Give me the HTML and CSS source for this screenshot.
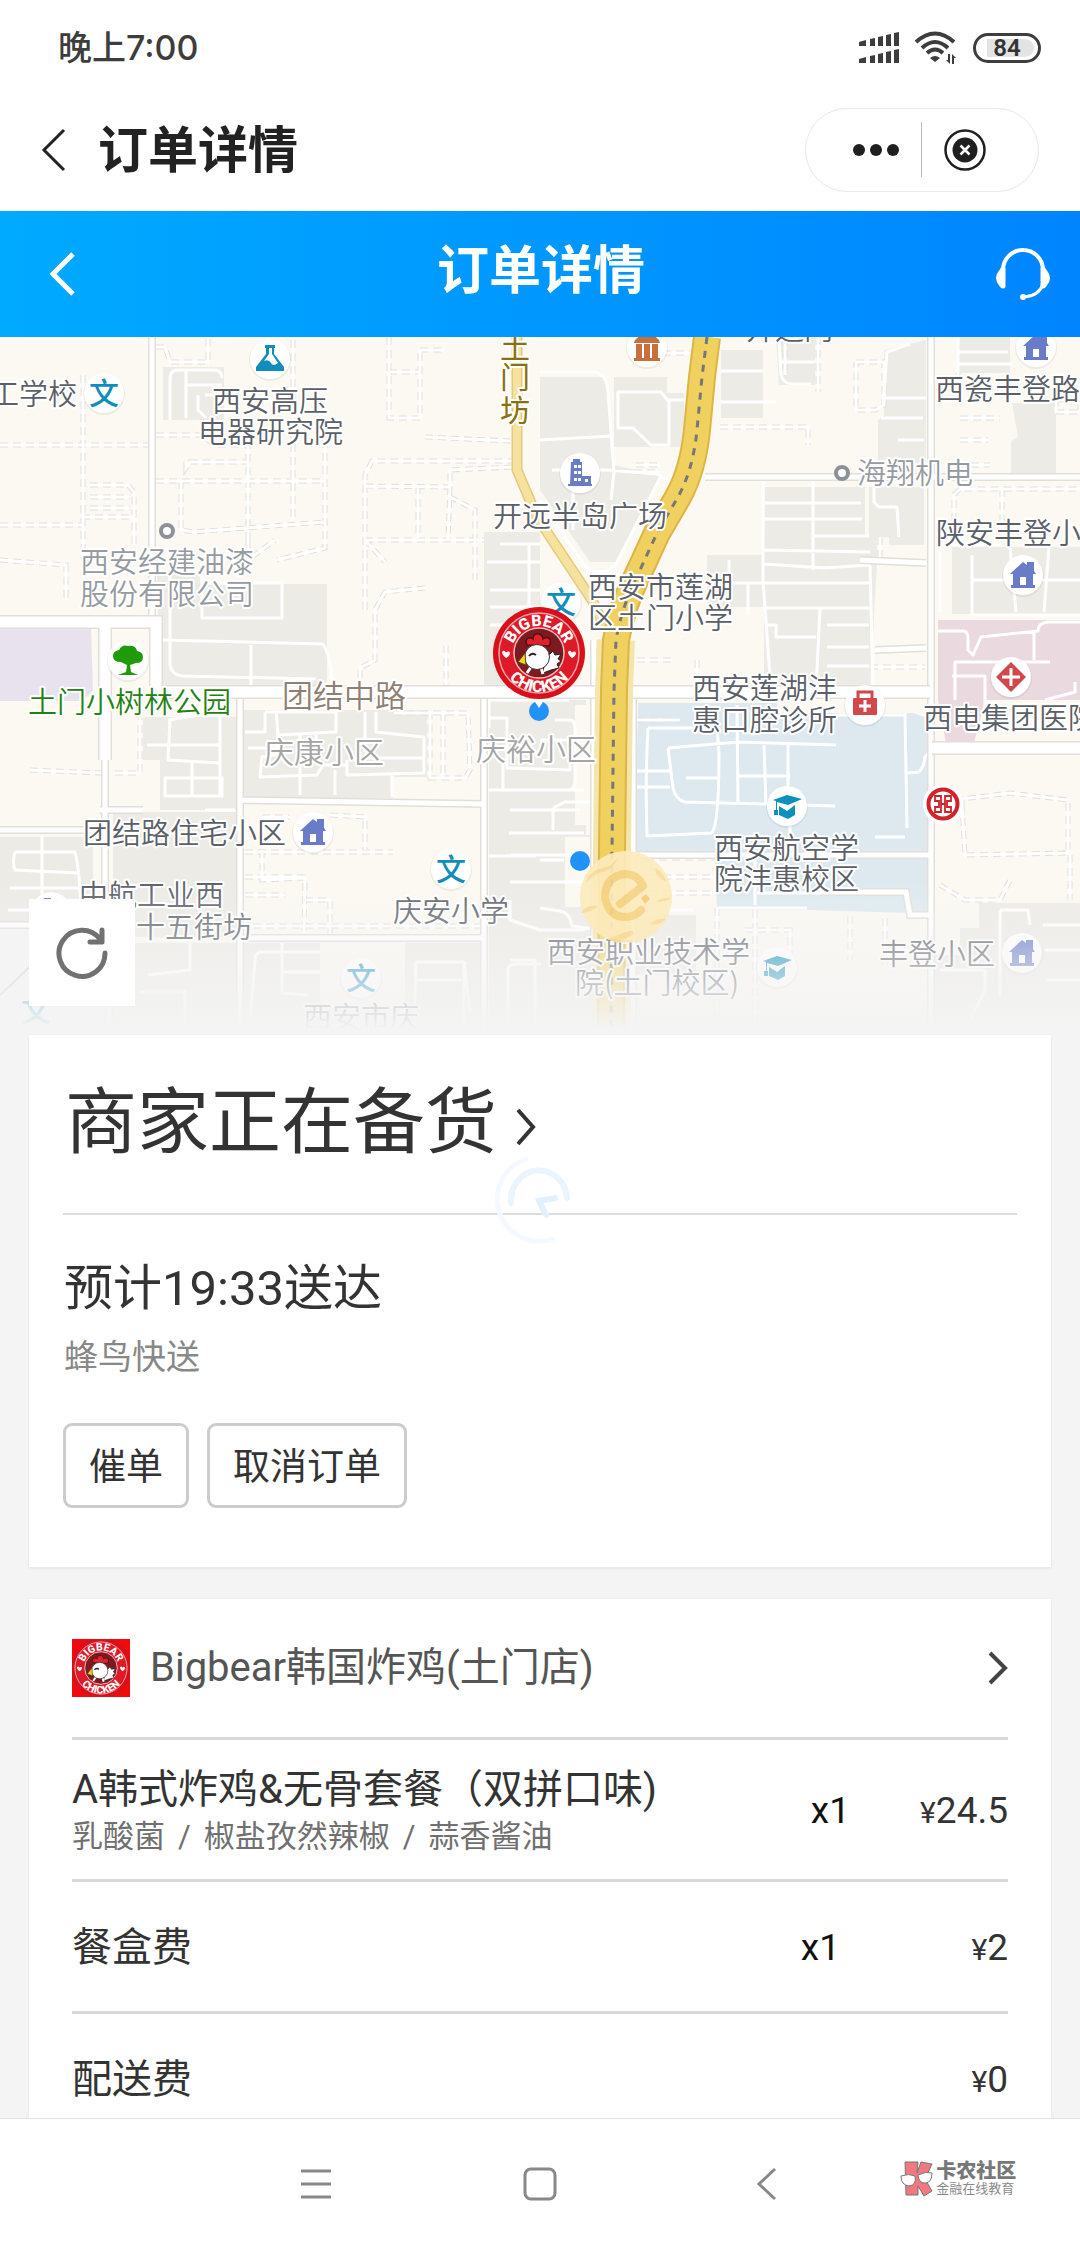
FILE: index.html
```html
<!DOCTYPE html>
<html lang="zh-CN">
<head>
<meta charset="utf-8">
<meta name="viewport" content="width=device-width, initial-scale=1">
<title>订单详情</title>
<link rel="stylesheet" href="styles.css">
</head>
<body>
<svg class="sprite" aria-hidden="true">
  <defs>
    <path id="arc-top" d="M19 46 A27 27 0 0 1 73 46"/>
    <path id="arc-bottom" d="M7 46 A39 39 0 0 0 85 46"/>
    <symbol id="brand" viewBox="0 0 92 92">
      <circle cx="46" cy="46" r="46" fill="#d9101a"/>
      <circle cx="46" cy="46" r="40" fill="#dd1a28" stroke="#f4a3a8" stroke-width="1.5"/>
      <circle cx="46" cy="46" r="25" fill="#7d1a20" stroke="#f7b9bc" stroke-width="1.5"/>
      <text class="brand-text"><textPath href="#arc-top" startOffset="50%" text-anchor="middle">BIGBEAR</textPath></text>
      <text class="brand-text"><textPath href="#arc-bottom" startOffset="50%" text-anchor="middle">CHICKEN</textPath></text>
      <path d="M9 45c2-3 4 0 4 1 0-1 3-3 4 0 0 3-4 5-4 5s-4-3-4-6zM75 45c2-3 4 0 4 1 0-1 3-3 4 0 0 3-4 5-4 5s-4-3-4-6z" fill="#fff"/>
      <path d="M34 38c-3-6 2-9 6-6 0-7 9-7 10 0 5-4 10 1 6 7z" fill="#e3202b" stroke="#4d1014" stroke-width="1.5"/>
      <path d="M52 52l8-8 2 4 6-1-3 5 3 2-4 3 2 4-8 2-8 3z" fill="#fff" stroke="#222" stroke-width="1"/>
      <path d="M38 60l-4 6M48 60l2 7" stroke="#fff" stroke-width="3"/>
      <circle cx="44" cy="50" r="12.5" fill="#fff" stroke="#333" stroke-width="1"/>
      <path d="M32 46l-7 9 8 3z" fill="#f1d128" stroke="#5b4a10" stroke-width="1"/>
      <path d="M36 49q3-4 7-1" fill="none" stroke="#222" stroke-width="2"/>
    </symbol>
    <symbol id="poi-bg" viewBox="-22 -22 44 44"><circle r="21" cy="1" fill="#000" opacity=".06"/><circle r="20" fill="#fff"/></symbol>
    <symbol id="house" viewBox="-22 -22 44 44">
      <circle r="21" cy="1" fill="#000" opacity=".06"/><circle r="20" fill="#fff"/>
      <path d="M-13-1L0-13l4 3v-3h7v9l2 3h-3v11h2v3h-24v-3h2V-1zM-3 2v8h6V2z" fill="#6a7bc8" fill-rule="evenodd"/>
    </symbol>
    <symbol id="building" viewBox="-22 -22 44 44">
      <circle r="21" cy="1" fill="#000" opacity=".06"/><circle r="20" fill="#fff"/>
      <path d="M-9-11h2v-3H0v3h2V3h9v8h1v2h-24v-2h2zM-6-8v3h3v-3zM-2-8v3h3v-3zM-6-2v3h3v-3zM-2-2v3h3v-3zM-6 5v3h3V5zM-2 5v3h3V5zM5 6v3h3V6z" fill="#6a7bc8" fill-rule="evenodd"/>
    </symbol>
    <symbol id="flask" viewBox="-22 -22 44 44">
      <circle r="21" cy="1" fill="#000" opacity=".06"/><circle r="20" fill="#fff"/>
      <path d="M-5-14H5v3H4v6L14 8v4h-28V8L-4-5v-6h-1zM-1-11v6l-5 7q5-2 7 2t7 0L2-5v-6z" fill="#118dbb" fill-rule="evenodd"/>
    </symbol>
    <symbol id="museum" viewBox="-22 -22 44 44">
      <circle r="21" cy="1" fill="#000" opacity=".06"/><circle r="20" fill="#fff"/>
      <path d="M-13-4q2-8 13-8t13 8zM-11-3h6v14h-6zM-3-3h6v14h-6zM5-3h6v14H5zM-13 11h26v3h-26z" fill="#c8703b"/>
    </symbol>
    <symbol id="tree" viewBox="-22 -22 44 44">
      <circle r="21" cy="1" fill="#000" opacity=".06"/><circle r="20" fill="#fff"/>
      <path d="M-2 12l1-7-6-3q-8 0-8-6 0-5 6-6 3-6 9-4 8-1 9 5 6 1 6 6 0 6-7 6L2 5l1 7 7 3h-20z" fill="#1f9a08"/>
    </symbol>
    <symbol id="cap" viewBox="-22 -22 44 44">
      <circle r="21" cy="1" fill="#000" opacity=".06"/><circle r="20" fill="#fff"/>
      <path d="M-14-6L0-11l15 4L1-1-10-4V4h1v5h-4V4h2v-9zM-8 0L0 5l8-6v10L1 13l-9-4z" fill="#0f8fbd"/>
    </symbol>
    <symbol id="medkit" viewBox="-22 -22 44 44">
      <circle r="21" cy="1" fill="#000" opacity=".06"/><circle r="20" fill="#fff"/>
      <path d="M-7-7v-6H7v6" fill="none" stroke="#d0474c" stroke-width="3"/>
      <rect x="-12" y="-7" width="24" height="17" rx="1" fill="#d0474c"/>
      <path d="M0-5v12M-6 1H6" stroke="#fff" stroke-width="3"/>
    </symbol>
    <symbol id="hospital" viewBox="-22 -22 44 44">
      <circle r="21" cy="1" fill="#000" opacity=".06"/><circle r="20" fill="#fff"/>
      <path d="M0-15L15 0 0 15-15 0z" fill="#d0474c"/>
      <path d="M0-9V9M-9 0H9" stroke="#fff" stroke-width="3"/>
    </symbol>
    <symbol id="bank" viewBox="-22 -22 44 44">
      <circle r="20" fill="#fff"/><circle r="14.5" fill="#fff" stroke="#cf2229" stroke-width="4"/>
      <path d="M-2-8h-6v5h4v6h-4v5h6zM2-8h6v5H4v6h4v5H2zM-2 0h4" fill="none" stroke="#cf2229" stroke-width="1.8"/>
    </symbol>
  </defs>
</svg>

<div class="app">
  <div class="status-bar">
    <span class="clock">晚上7:00</span>
    <div class="status-icons">
      <svg width="40" height="32" viewBox="0 0 40 32" fill="#3d3d3d" role="img" aria-label="信号">
        <path d="M0 10l7-2v6H0zM11 7l5-1v8h-5zM19 5l5-1v10h-5zM27 3l5-1v12h-5zM35 1l5-1v14h-5zM0 27l7-2v6H0zM11 24l5-1v8h-5zM19 22l5-1v10h-5zM27 20l5-1v12h-5zM35 18l5-1v14h-5z"/>
      </svg>
      <svg width="44" height="34" viewBox="0 0 44 34" role="img" aria-label="无线网络">
        <path d="M2 11Q21-6 40 11M8 17Q21 5 34 17M13 22Q21 15 29 22" fill="none" stroke="#3d3d3d" stroke-width="4"/>
        <path d="M16 27q5-4 10 0l-5 4zM36 23v10l-4-4h2v-6zM38 33V23l4 4h-2v6z" fill="#3d3d3d"/>
      </svg>
      <span class="battery"><span class="battery-level">84</span></span>
    </div>
  </div>

  <div class="mini-bar">
    <button class="icon-button" aria-label="返回">
      <svg width="26" height="44" viewBox="0 0 26 44" fill="none" stroke="#222" stroke-width="3"><path d="M24 2L4 22l20 20"/></svg>
    </button>
    <div class="mini-title">订单详情</div>
    <div class="capsule">
      <button class="icon-button" aria-label="更多">
        <svg width="46" height="12" viewBox="0 0 46 12" fill="#1f1f1f"><circle cx="6" cy="6" r="6"/><circle cx="23" cy="6" r="6"/><circle cx="40" cy="6" r="6"/></svg>
      </button>
      <span class="capsule-line"></span>
      <button class="icon-button" aria-label="关闭">
        <svg width="42" height="42" viewBox="0 0 42 42"><circle cx="21" cy="21" r="19.5" fill="none" stroke="#1f1f1f" stroke-width="2.5"/><circle cx="21" cy="21" r="12.5" fill="#1f1f1f"/><path d="M16.5 16.500l9 9M25.500 16.500l-9 9" stroke="#fff" stroke-width="2.5"/></svg>
      </button>
    </div>
  </div>

  <header class="top-bar">
    <button class="icon-button" aria-label="返回上一页">
      <svg width="28" height="44" viewBox="0 0 28 44" fill="none" stroke="#fff" stroke-width="5"><path d="M25 2L5 22l20 20"/></svg>
    </button>
    <h1>订单详情</h1>
    <button class="icon-button" aria-label="联系客服">
      <svg width="58" height="56" viewBox="0 0 58 56" fill="none" stroke="#fff">
        <path d="M9 30V24a20 20 0 0 1 40 0v8" stroke-width="4"/>
        <path d="M9 23v17M49 23v17" stroke-width="5" stroke-linecap="round"/>
        <path d="M6 25q-6 7 0 14zM52 25q6 7 0 14z" fill="#fff" stroke-width="2"/>
        <path d="M49 38Q45 50 30 51" stroke-width="3"/><circle cx="29" cy="51" r="3" fill="#fff" stroke="none"/>
      </svg>
    </button>
  </header>

  <main>
    <section class="map" aria-label="配送地图">
      <svg class="map-canvas" viewBox="0 337 1080 698" preserveAspectRatio="xMidYMid slice">
        <defs>
          <linearGradient id="fade" x1="0" y1="880" x2="0" y2="1030" gradientUnits="userSpaceOnUse">
            <stop offset="0" stop-color="#f4f4f4" stop-opacity="0"/><stop offset=".5" stop-color="#f4f4f4" stop-opacity=".5"/><stop offset="1" stop-color="#f4f4f4"/>
          </linearGradient>
          <path id="streets" d="M152 337V620L158 690M105 620V923L110 1035M240 692V1035M484 692V1035M240 800L484 804M240 938H484M0 830H105M705 477H1080M931 337V1035M633 690V1035M594 640V1035M860 560L926 563M0 925H110M875 650L926 648M100 810H143M600 855H930M932 915L910 915 906 892H820"/>
          <path id="avenues" d="M0 622H156V690M165 692H930M932 748H1080M105 620V760"/>
          <path id="paths" d="M156 347H165L170 362H208V337M83 375V560M0 445H150M156 435H200L215 445H248V540M156 481H325M186 462V468L190 462H248M181 481V530L193 532 325 522M248 540V560L275 540M325 440V548L277 560M293 340V520M90 485H128L134 492V545M90 497H130M90 508H130M82 517H134M0 525H82M0 560L66 565V600M389 337V418H420V350M389 372H420M420 350H445M425 437L512 441M365 610V475L372 461H512M365 486L450 487V470L512 467M418 486V538M450 487L448 540M450 497L475 510V580M365 540H484M365 540L385 562M425 588L385 592 375 610V660L360 668V690M446 645V690M818 337V392M785 337V375M856 362H884V405L876 410H856V362M958 373V400M958 465H990M960 418H1000M960 440H988M1056 400H1080V412H1056ZM954 547V495L960 489H1080M1002 489V540M720 427H808V445M637 353H690M636 465H660M634 472H660M880 537V565M637 660H672M697 660V675M870 667H925M30 770L102 773M115 773H140V718M262 817H290M330 815L365 817V850M245 852H393M262 850V880L305 878 304 935M245 877H305M245 895H285M305 900H330V935M240 926H484M394 713H468L470 770 465 778H430V715M443 713V778M637 720H680M637 877H716M637 893H716M646 858H716M717 908V1035M745 930H790V960M755 910V1030M850 916V960M885 918V965M962 805L965 855 1068 853V800L1010 793 962 799ZM940 885L965 900H1000L1010 880M1070 855V900"/>
          <path id="main-road" d="M707 337L702 377 697 430Q693 470 678 497L657 533 640 570Q622 605 616 640L614 690 612 850 611 1035"/>
        </defs>
        <rect y="337" width="1080" height="698" fill="#fcf9f2"/>
        <path fill="#f4f4f6" d="M0 925h105v110H0z"/>
        <path fill="#ecebe6" d="M163 367h61v53h-61zM157 575h43v9h127v106H160zM484 532h56v155h-56zM143 717h95v93h-78v-50h-17zM113 812h125v125H113zM243 710h184v67h-34v21H243zM0 837h93v86H0zM110 943h128v92H110zM243 943h77v92h-77zM405 943h77v92h-77zM489 700h97v335h-97zM586 835h6v200h-6zM540 377h66l7 88 47 10-43 87h-27l-50-72zM614 377h53v16h17v54h-70zM721 350h42v68h-42zM776 337h39v48h-36zM884 350l42-10v130h-48v-50l6-4zM958 337h52v36h-52zM1012 403h44v70h-45v-32l7-4zM765 487h100v50h-101zM869 487h55v58h-35v-8h-20zM764 537h113v26l-7 127H764zM707 555h57v52h-57zM952 547h128v67H952zM979 903h101v132H935v-80h25v-27h19zM633 915h63v60h-63z"/>
        <path fill="#fcf9f2" d="M565 837h28v70h-28zM575 705h18v120h-18z"/>
        <path fill="#ead9df" d="M938 620h142v80h-95l-11 43h-28l-8-43z"/>
        <path fill="#e8e2ee" d="M0 628h91l2 62-10 11H0z"/>
        <path fill="#dde9ef" d="M638 703h139v10h136l14 5v195h-17l-102-3h-91l-2-55h-80z"/>
        <use href="#paths" class="path-edge"/><use href="#paths" class="path-fill"/>
        <path class="lane" d="M170 420V378q0-8 8-8h36q8 0 8 8M186 370v48M186 385h36M198 395v15l8 8M205 395h17M170 575v90q2 10 12 11l134 3M202 575v43h80v-35h-78M163 640l160 4q8 12 10 45M251 645v40M500 544h40M487 562h53M490 590h50M490 607h50M490 625h30M529 545v80M540 372h55q12 2 13 20l6 80-3 28M540 440l72-4M618 392h43l8 10v43h-18l-18-17h-15zM668 400h25M721 371h42M721 402h55M779 340l2 35q2 8 10 9h20M780 362h35M910 344l-23 8-4 55M884 398h42M881 418h42M898 440h26M958 352h50M958 364h55M958 373v-36M552 470h55l50 4 20 12M660 478l-45 88q-15 12-30 0l-45-65M573 480v50M763 480v100l8 110M813 480v90M765 503h96M764 519h98M813 536h56M764 550l106 2M764 564l60 4 46-3M764 583h106M765 608h104M820 608l-4 82M767 625h9v12h40M827 625h42M827 647h42M827 666h42M729 560v42M707 583h57M748 583v32M874 487v15l5 5h18l2 30M870 565l3 125M940 612V545h62M972 555v60M1010 547l6 65M1049 547l-5 65M972 580h108M973 615h107M938 631h25q5 0 5 7v12l5 5 8-18 57-6q0-8 10-9h32M1034 630v30M955 700v-38h95M952 676h33v45M1045 700l30-8v-10"/>
        <path class="lane" d="M170 720l-2 40 52 3v-50M168 720l63-10M147 745h73M192 763v32M165 778h57v18h-57zM220 763v33M265 712v20h-20M265 712h71v20l-58 3-2-25M278 735l-3 20-13 2-2 20 57-2 6-10h24M300 735v60M316 735v20M335 770v25M347 760v15l77-2v-15h-75M365 712v40M376 712v20l48 5v20M392 775v22M248 748h35M15 852h60q5 20 6 60M15 852q-3 12 0 18l63 3M42 835v75M10 888h70M8 910h85M205 810h30M489 728v-28h80M489 718h18v50l63 2v-30h-30M503 765v25M484 790h100M486 856h50M510 810h70M509 833h75M511 855h76M510 882h74M510 900v20l30 10h45M553 808v22M553 808l12-6h30M510 960h25v70M555 720h15q5 0 5 9v50q0 10-5 11h-30M540 860h24M540 908l20 3q10 2 12 15l22 3M282 943v50l26 2M250 1020l5-60q0-8 8-8h57M282 972h38M416 962h48v65h-50zM416 980h45M464 962l6 50M508 1030v-60q0-6 8-6h25M148 975l42-5v-27M140 992h45v40M633 910h60M1000 910h28l2 15M1000 910v87M1043 925h37M1045 950h35M1045 980h35M940 970h45v20l-15 30"/>
        <path class="lane" d="M648 728h69l2 25q0 70-7 80l-65 3q-2-55 1-108M668 748l70-6 98 3M668 748l5 40q3 12 12 14l150 4M686 778h31M737 705l1 97M764 745l2 60M788 745v60M738 776h52M634 771h36M634 787h36M905 713l2 115M907 773l12-1q5-5 6-15l7-8M835 715h70M790 826v26M755 855v50M757 893h150M717 908h90M875 837h30"/>
        <use href="#streets" class="street-edge"/><use href="#streets" class="street-fill"/>
        <use href="#avenues" class="avenue-edge"/><use href="#avenues" class="avenue-fill"/>
        <path class="branch-edge" d="M517 337V470L537 517 592 600 606 630"/><path class="branch-fill" d="M517 337V470L537 517 592 600 606 630"/>
        <path class="main-side" d="M616 640L614 690 612 850 611 1035"/>
        <use href="#main-road" class="main-edge"/><use href="#main-road" class="main-fill"/><use href="#main-road" class="main-dash"/>
        <path d="M0 995L35 962" stroke="#ccc" stroke-width="2"/>

        <g class="pois">
          <use href="#poi-bg" x="82" y="371" width="44" height="44"/>
          <use href="#poi-bg" x="539" y="580" width="44" height="44"/>
          <use href="#poi-bg" x="429" y="847" width="44" height="44"/>
          <use href="#poi-bg" x="339" y="956" width="44" height="44"/>
          <text class="school" x="104" y="404">文</text>
          <text class="school" x="561" y="613">文</text>
          <text class="school" x="451" y="880">文</text>
          <text class="school" x="361" y="989">文</text>
          <text class="school" x="36" y="1021">文</text>
          <use href="#flask" x="248" y="337" width="44" height="44"/>
          <use href="#museum" x="625" y="325" width="44" height="44"/>
          <use href="#house" x="1014" y="325" width="44" height="44"/>
          <use href="#house" x="1001" y="553" width="44" height="44"/>
          <use href="#house" x="291" y="810" width="44" height="44"/>
          <use href="#house" x="1000" y="931" width="44" height="44"/>
          <use href="#building" x="558" y="451" width="44" height="44"/>
          <use href="#building" x="29" y="890" width="44" height="44"/>
          <use href="#tree" x="106" y="638" width="44" height="44"/>
          <use href="#medkit" x="843" y="683" width="44" height="44"/>
          <use href="#hospital" x="989" y="655" width="44" height="44"/>
          <use href="#cap" x="765" y="784" width="44" height="44"/>
          <use href="#cap" x="755" y="945" width="44" height="44"/>
          <use href="#bank" x="921" y="782" width="44" height="44"/>
          <circle cx="167" cy="531" r="6" fill="#fff" stroke="#8c9198" stroke-width="4"/>
          <circle cx="842" cy="473" r="6" fill="#fff" stroke="#8c9198" stroke-width="4"/>
        </g>
        <g class="labels">
          <text x="-10" y="405">工学校</text>
          <text x="212" y="412">西安高压</text><text x="198" y="443">电器研究院</text>
          <text x="746" y="340">开远门</text>
          <text x="935" y="400">西瓷丰登路</text>
          <text x="493" y="527">开远半岛广场</text>
          <text x="936" y="544">陕安丰登小</text>
          <text x="588" y="598">西安市莲湖</text><text x="588" y="629">区土门小学</text>
          <text x="692" y="699">西安莲湖沣</text><text x="692" y="731">惠口腔诊所</text>
          <text x="923" y="729">西电集团医院</text>
          <text x="83" y="844">团结路住宅小区</text>
          <text x="79" y="906">中航工业西</text><text x="136" y="938">十五街坊</text>
          <text x="393" y="922">庆安小学</text>
          <text x="714" y="859">西安航空学</text><text x="714" y="890">院沣惠校区</text>
          <text x="879" y="965">丰登小区</text>
          <text x="547" y="963">西安职业技术学</text><text x="575" y="994">院(土门校区)</text>
          <text x="303" y="1028">西安市庆</text>
          <text class="label-muted" x="80" y="573">西安经建油漆</text><text class="label-muted" x="80" y="605">股份有限公司</text>
          <text class="label-muted" x="857" y="484">海翔机电</text>
          <text class="label-park" x="28" y="713">土门小树林公园</text>
          <text class="label-street" x="282" y="707">团结中路</text>
          <text class="label-area" x="264" y="763">庆康小区</text>
          <text class="label-area" x="476" y="760">庆裕小区</text>
          <text class="label-branch" x="500" y="358">土</text><text class="label-branch" x="500" y="388">门</text><text class="label-branch" x="500" y="421">坊</text>
        </g>
        <rect y="880" width="1080" height="155" fill="url(#fade)"/>

        <circle cx="580" cy="861" r="10" fill="#2292fb"/>
        <g opacity=".92">
          <circle cx="626" cy="897" r="46" fill="#fdebbd"/>
          <path d="M588 876q9-8 22-10l8-8q-5 10-12 13-10 1-20 12zM582 911q6-6 16-5-6 6-17 7zM655 868q1 10 12 14-6-12-12-14zM656 901q8-4 15-3-4 5-15 3zM650 924q8-6 16-5-6 7-16 5zM607 939l22-8q8-1 2 5l-14 7z" fill="#f7dc9c"/>
          <path d="M643 886Q638 874 624 874 605 877 605 898 609 918 627 917 636 916 641 910M620 904L643 886" fill="none" stroke="#f5d487" stroke-width="8" stroke-linecap="round" stroke-linejoin="round"/>
          <path d="M641 898l5-4 4 5-5 5z" fill="#f5cb76"/>
        </g>
        <circle cx="539" cy="711" r="10" fill="#2292fb"/>
        <path d="M533 699h12l-6 9z" fill="#fff"/>
        <use href="#brand" x="493" y="607" width="92" height="92"/>
      </svg>
      <button class="refresh" aria-label="刷新">
        <svg width="52" height="54" viewBox="0 0 52 54" fill="none" stroke="#717171" stroke-width="5" stroke-linecap="round" stroke-linejoin="round">
          <path d="M49 27A23 23 0 1 1 44 13M46 4v12H34"/>
        </svg>
      </button>
    </section>

    <section class="card status-card">
      <h2 class="status-title"><a href="#progress">商家正在备货
        <svg width="22" height="38" viewBox="0 0 22 38" fill="none" stroke="#333" stroke-width="4"><path d="M3 2l15 17L3 36"/></svg></a>
      </h2>
      <svg class="loader" width="84" height="92" viewBox="0 0 84 92" fill="none" stroke-linecap="round" aria-hidden="true">
        <path d="M31 4A42 42 0 1 0 58 84" stroke="#f3f9fe" stroke-width="5"/>
        <path d="M16 48a28 30 0 0 1 56-5" stroke="#e9f4fd" stroke-width="6"/>
        <path d="M60 43l-16 3 7 14" stroke="#e3f1fc" stroke-width="6"/>
      </svg>
      <p class="eta">预计19:33送达</p>
      <p class="courier">蜂鸟快送</p>
      <div class="actions">
        <button class="action">催单</button>
        <button class="action">取消订单</button>
      </div>
    </section>

    <section class="card order-card">
      <a class="shop" href="#shop">
        <svg class="shop-logo" viewBox="0 0 58 58" aria-hidden="true"><rect width="58" height="58" fill="#ef0a0d"/><use href="#brand" x="-1" y="-1" width="60" height="60"/></svg>
        <span class="shop-name">Bigbear韩国炸鸡(土门店)</span>
        <svg width="20" height="34" viewBox="0 0 20 34" fill="none" stroke="#444" stroke-width="4"><path d="M2 2l15 15L2 32"/></svg>
      </a>
      <table class="items">
        <tbody>
          <tr class="dish">
            <td><div class="item-name">A韩式炸鸡&amp;无骨套餐（双拼口味)</div><div class="item-note"><span>乳酸菌</span><span>/</span><span>椒盐孜然辣椒</span><span>/</span><span>蒜香酱油</span></div></td>
            <td class="qty">x1</td>
            <td class="price"><small>¥</small>24.5</td>
          </tr>
          <tr class="fee"><td class="item-name">餐盒费</td><td class="qty">x1</td><td class="price"><small>¥</small>2</td></tr>
          <tr class="fee"><td class="item-name">配送费</td><td class="qty"></td><td class="price"><small>¥</small>0</td></tr>
        </tbody>
      </table>
    </section>
  </main>

  <nav class="system-nav" aria-label="系统导航">
    <button class="icon-button menu" aria-label="最近任务"><svg width="32" height="32" viewBox="0 0 32 32" stroke="#888" stroke-width="3"><path d="M1 3h30M1 16h30M1 29h30"/></svg></button>
    <button class="icon-button" aria-label="主屏幕"><svg width="34" height="34" viewBox="0 0 34 34" fill="none" stroke="#888" stroke-width="3"><rect x="2" y="2" width="30" height="30" rx="6"/></svg></button>
    <button class="icon-button" aria-label="后退"><svg width="22" height="34" viewBox="0 0 22 34" fill="none" stroke="#888" stroke-width="3"><path d="M19 2L3 17l16 15"/></svg></button>
    <div class="watermark">
      <svg width="34" height="36" viewBox="0 0 34 36" stroke="#777" stroke-width="1">
        <path d="M5 1h13l-1 11 4-11 11 2-7 15 7 12-8 5-6-10v9H6z" fill="#f07880"/>
        <path d="M1 15q8-3 14 0 2 9-6 10-8-1-8-10zM18 14q8-4 14-2 0 9-6 10-7 1-8-8z" fill="#fff"/>
      </svg>
      <div class="watermark-text"><strong>卡农社区</strong><span>金融在线教育</span></div>
    </div>
  </nav>
</div>
</body>
</html>
```

FILE: styles.css
```css
* { box-sizing: border-box; }

body {
  margin: 0;
  background: #f4f4f4;
  color: #333;
  font-family: Roboto, "Noto Sans CJK SC", sans-serif;
}

h1, h2, p { margin: 0; font-weight: 400; }
a { color: inherit; text-decoration: none; }
svg { display: block; flex: none; }
.sprite { position: absolute; width: 0; height: 0; }

.icon-button {
  display: flex;
  padding: 0;
  border: 0;
  background: none;
}

.app {
  display: flex;
  flex-direction: column;
  height: 100vh;
}

/* phone status bar */
.status-bar {
  display: flex;
  flex: none;
  align-items: center;
  justify-content: space-between;
  height: 96px;
  padding: 0 39px 0 58px;
  background: #fff;
}
.clock {
  color: #3d3d3d;
  font: 500 34px/40px Inter, "Noto Sans CJK SC", sans-serif;
}
.status-icons { display: flex; align-items: center; gap: 15px; }
.battery {
  display: flex;
  width: 68px;
  height: 30px;
  padding: 3px 4px 3px 11px;
  border: 3px solid #3d3d3d;
  border-radius: 15px;
}
.battery-level {
  flex: 1;
  padding-right: 7px;
  border-radius: 0 9px 9px 0;
  background: #e3e3e3;
  color: #333;
  font-size: 24px;
  font-weight: 600;
  line-height: 19px;
  text-align: center;
}

/* mini program bar */
.mini-bar {
  display: flex;
  flex: none;
  align-items: center;
  height: 115px;
  padding: 0 41px 8px 40px;
  background: #fff;
}
.mini-title {
  flex: 1;
  padding: 2px 0 0 32px;
  color: #222;
  font-size: 50px;
  font-weight: 700;
  line-height: 64px;
}
.capsule {
  display: flex;
  align-items: center;
  justify-content: flex-end;
  gap: 22px;
  width: 234px;
  height: 84px;
  padding-right: 52px;
  border: 1px solid #e8e8e8;
  border-radius: 42px;
}
.capsule-line { width: 1px; height: 55px; background: #bbb; }

/* page header */
.top-bar {
  display: grid;
  flex: none;
  grid-template-columns: 1fr auto 1fr;
  align-items: center;
  height: 126px;
  padding: 0 28px 0 48px;
  background: linear-gradient(90deg, #00aaff, #0085ff);
}
.top-bar h1 {
  padding: 0 16px 4px 0;
  margin-left: -2px;
  color: #fff;
  font-size: 52px;
  font-weight: 700;
  line-height: 64px;
}
.top-bar .icon-button:last-child { justify-self: end; }

main {
  flex: 1;
  min-height: 0;
  overflow-y: auto;
  scrollbar-width: none;
}

/* map */
.map { position: relative; height: 698px; }
.map-canvas { width: 100%; height: 100%; }
.refresh {
  position: absolute;
  bottom: 29px;
  left: 29px;
  display: grid;
  place-items: center;
  width: 106px;
  height: 107px;
  padding: 0;
  border: 0;
  background: #fff;
}
.lane { fill: none; stroke: #fff; stroke-width: 3; stroke-linejoin: round; }
.path-edge { fill: none; stroke: #e2dfdb; stroke-width: 5; stroke-dasharray: 8 5; }
.path-fill { fill: none; stroke: #fff; stroke-width: 3; }
.street-edge { fill: none; stroke: #e2dfda; stroke-width: 8; }
.street-fill { fill: none; stroke: #fff; stroke-width: 5; }
.avenue-edge { fill: none; stroke: #e2dfda; stroke-width: 14; }
.avenue-fill { fill: none; stroke: #fff; stroke-width: 11; }
.branch-edge { fill: none; stroke: #e5ca78; stroke-width: 11; }
.branch-fill { fill: none; stroke: #f6e29f; stroke-width: 8; }
.main-side { fill: none; stroke: #f4e5ad; stroke-width: 38; }
.main-edge { fill: none; stroke: #ddb545; stroke-width: 28; }
.main-fill { fill: none; stroke: #f0d160; stroke-width: 24; }
.main-dash { fill: none; stroke: #777; stroke-width: 3; stroke-dasharray: 7 7; }
.labels text {
  fill: #5b6068;
  stroke: #fff;
  stroke-width: 4px;
  stroke-linejoin: round;
  paint-order: stroke;
  font-family: "Noto Sans CJK SC", sans-serif;
  font-size: 29px;
  font-weight: 350;
}
.labels .label-muted { fill: #969aa1; }
.labels .label-park { fill: #1f8212; }
.labels .label-street { fill: #8f8074; font-size: 31px; }
.labels .label-area { fill: #a5a5a5; font-size: 30px; }
.labels .label-branch { fill: #8a7110; font-size: 30px; font-weight: 400; }
.school {
  fill: #118dbb;
  font-family: "Noto Sans CJK SC", sans-serif;
  font-size: 30px;
  font-weight: 500;
  text-anchor: middle;
}
.brand-text {
  fill: #fff;
  font-family: Roboto, sans-serif;
  font-size: 16px;
  font-weight: 800;
}

/* cards */
.card {
  margin: 0 29px;
  background: #fff;
  box-shadow: 0 1px 3px rgba(0, 0, 0, .08);
}
.status-card {
  position: relative;
  padding: 0 34px 59px;
}
.status-title {
  padding: 36px 2px 38px;
  border-bottom: 2px solid #ddd;
  font-size: 72px;
  line-height: 104px;
}
.status-title a { display: flex; align-items: center; gap: 18px; }
.status-title svg { margin-top: 8px; }
.loader { position: absolute; top: 120px; left: 466px; }
.eta { padding: 42px 1px 0; font-size: 49px; line-height: 64px; }
.courier { padding: 12px 1px 0; color: #888; font-size: 34px; line-height: 48px; }
.actions { display: flex; gap: 18px; padding-top: 42px; }
.action {
  height: 85px;
  padding: 5px 23px 0;
  border: 3px solid #ccc;
  border-radius: 9px;
  background: #fff;
  color: #333;
  font: 400 37px/48px Roboto, "Noto Sans CJK SC", sans-serif;
}

.order-card { margin-top: 32px; padding: 0 43px; }
.shop { display: flex; align-items: center; height: 138px; }
.shop-logo { width: 58px; height: 58px; }
.shop-name {
  flex: 1;
  padding-left: 20px;
  color: #555;
  font-size: 40px;
  line-height: 56px;
}
.items { width: 100%; border-collapse: separate; border-spacing: 0; }
.items td { padding: 2px 0 0; border-top: 3px solid #d9d9d9; }
.items .dish { height: 142px; }
.items .fee { height: 132px; }
.item-name { font-size: 40px; line-height: 52px; }
.item-note { display: flex; gap: 13px; color: #707070; font-size: 31px; line-height: 42px; }
.items .qty { color: #111; font-size: 37px; text-align: right; }
.items .fee .qty { padding-right: 10px; }
.items .price { width: 158px; font-size: 37px; text-align: right; }
.price small { font-size: 30px; }

/* system navigation */
.system-nav {
  display: grid;
  flex: none;
  grid-template-columns: 38fr 41fr 42fr 42fr 37fr;
  align-items: center;
  height: 130px;
  border-top: 1px solid #e2e2e2;
  background: #fff;
}
.system-nav .icon-button { justify-self: center; }
.system-nav .menu { grid-column: 2; }
.watermark { display: flex; align-items: center; gap: 2px; padding: 0 0 10px 20px; }
.watermark-text { display: grid; color: #8a8a8a; }
.watermark-text strong { color: #777; font-size: 20px; font-weight: 900; line-height: 20px; }
.watermark-text span { font-size: 13px; line-height: 16px; }
```
